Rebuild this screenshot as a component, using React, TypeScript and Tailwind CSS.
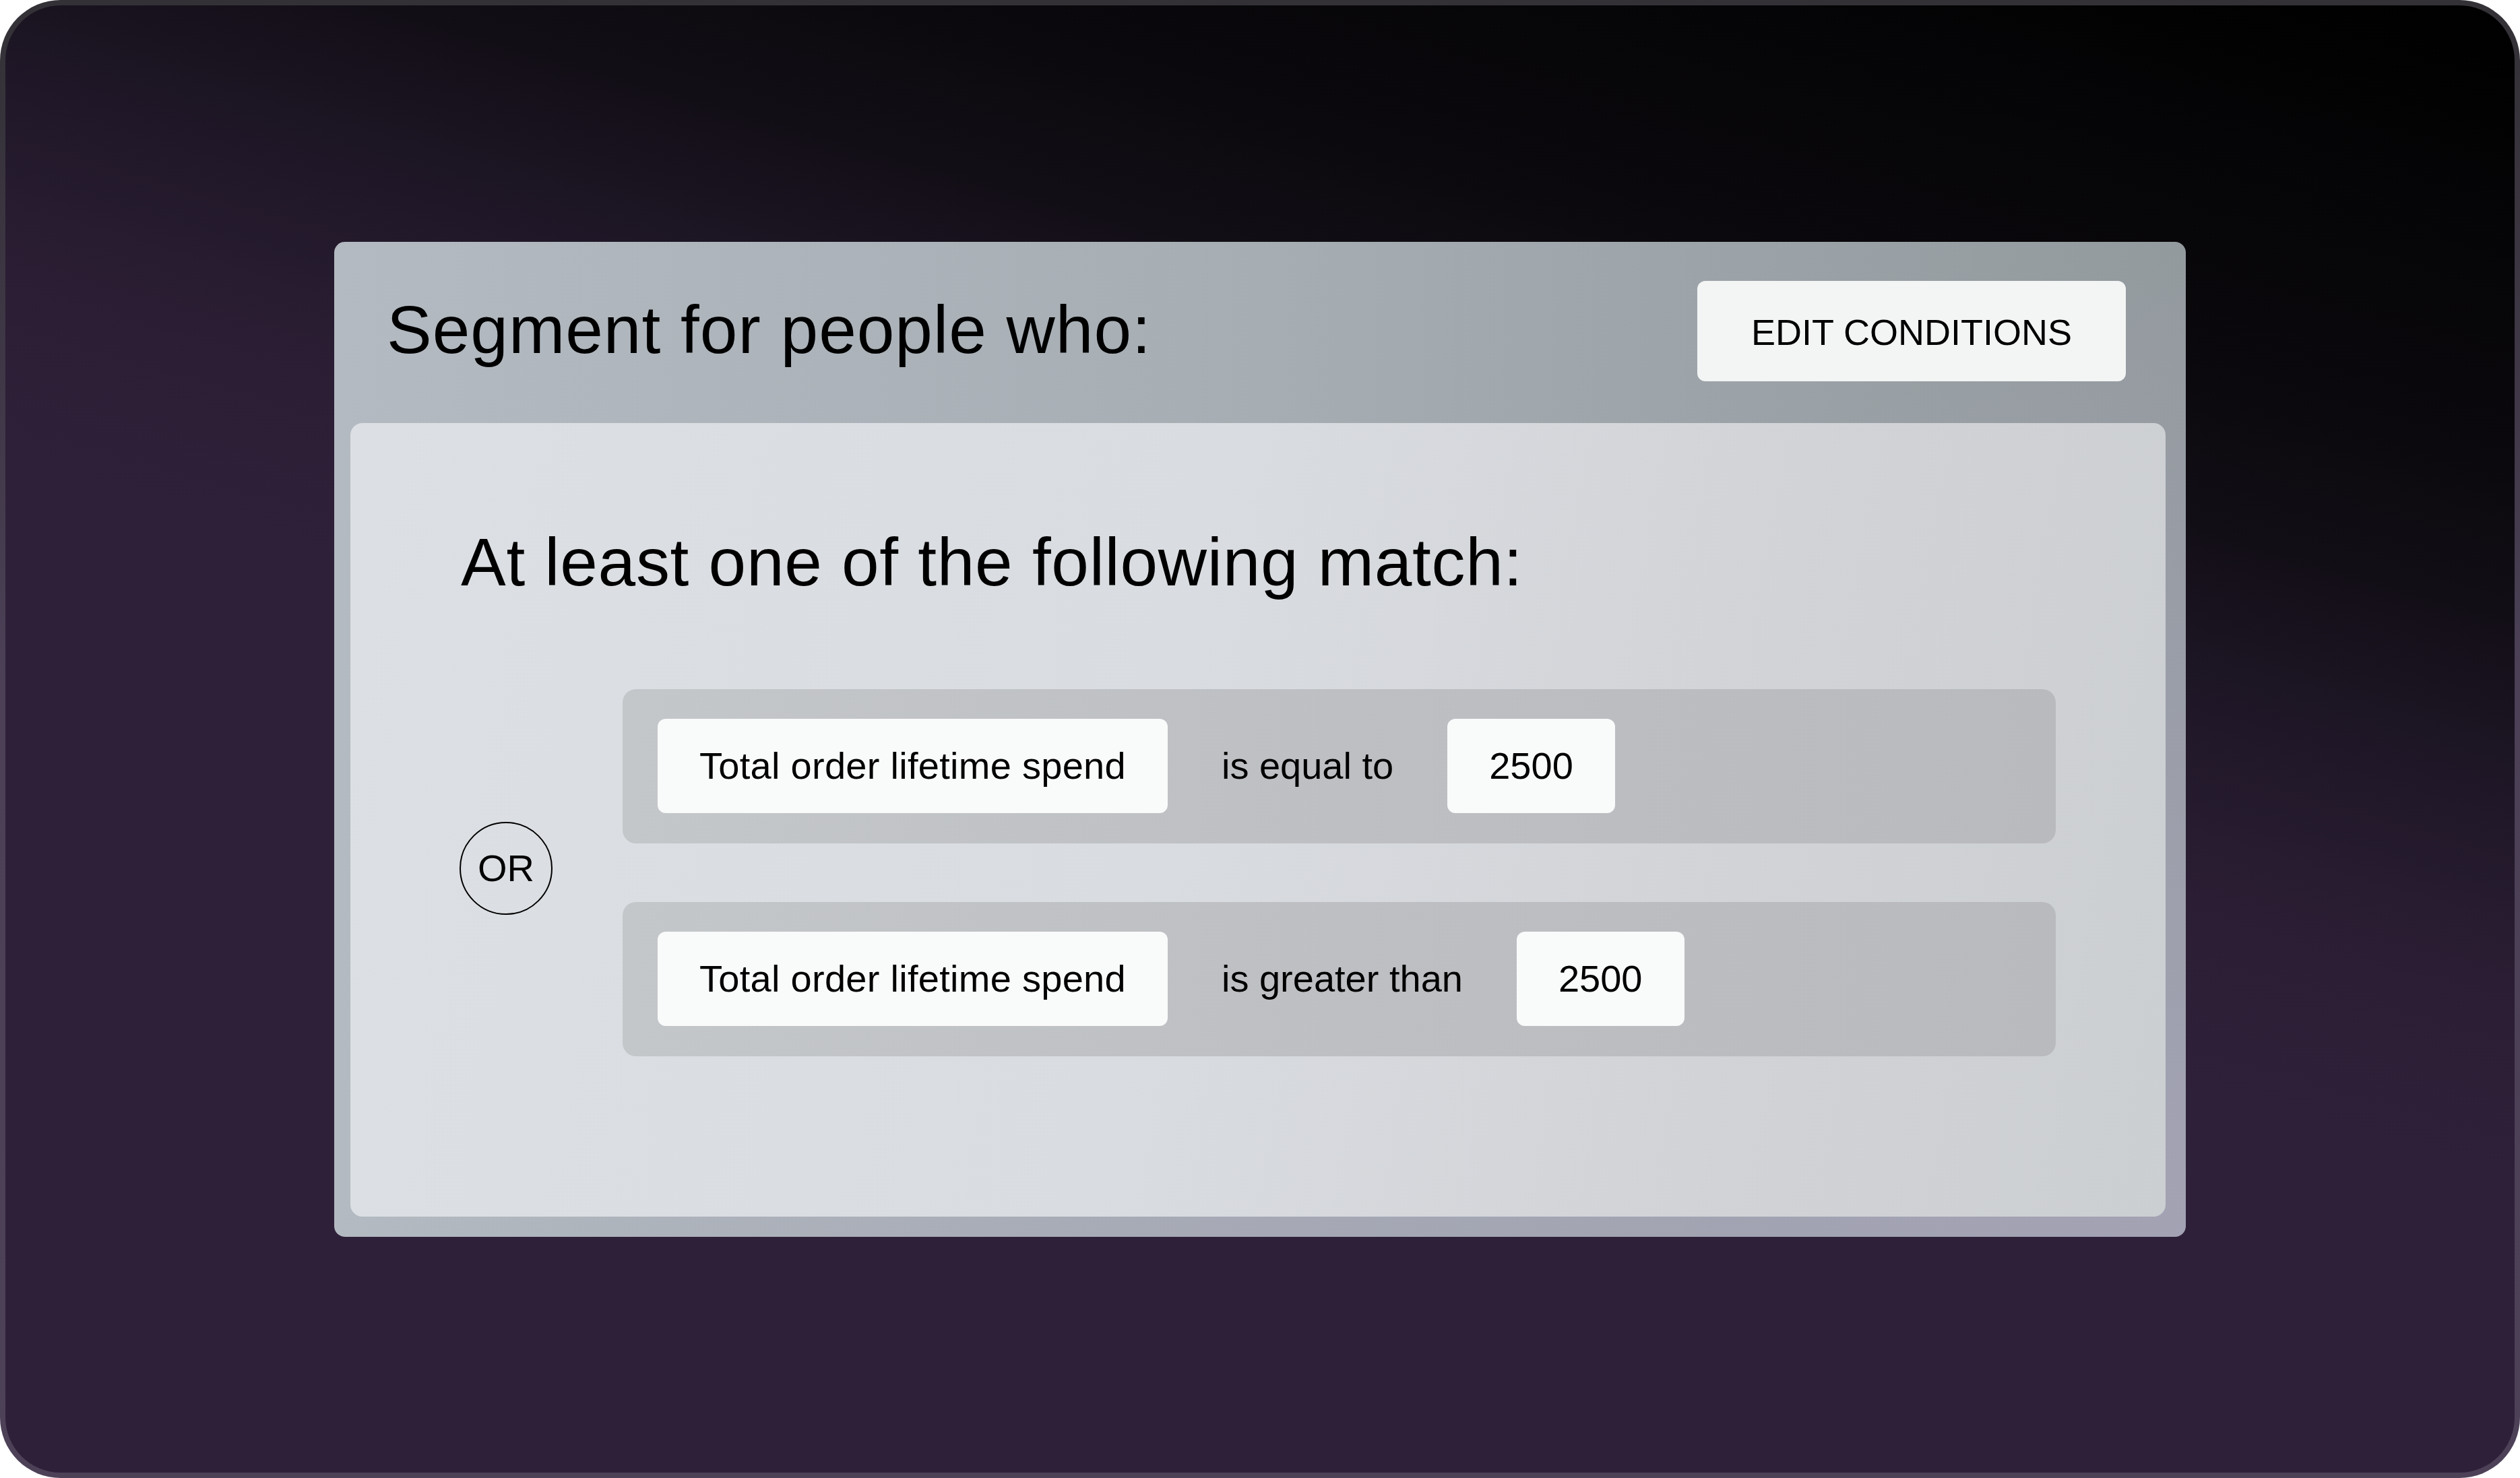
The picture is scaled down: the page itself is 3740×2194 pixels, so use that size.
export default function App() {
  const rows = [
    { field: 'Total order lifetime spend', op: 'is equal to', value: '2500' },
    { field: 'Total order lifetime spend', op: 'is greater than', value: '2500' },
  ];

  return (
    <div className="w-[3740px] h-[2194px] bg-white font-['Liberation_Sans',Arial,sans-serif] text-black">
      {/* Outer frame */}
      <div className="w-full h-full rounded-[90px] p-[8px] bg-[linear-gradient(to_bottom,#333136_0%,#3f3746_25%,#4b4056_45%,#4d4158_100%)]">
        <div className="w-full h-full rounded-[82px] flex items-center justify-center bg-[linear-gradient(196deg,#000000_0%,#0a080c_20%,#120e16_28%,#1f1727_36%,#2b1e34_45%,#2f2039_54%,#2f2039_100%)]">
          {/* Card */}
          <div className="w-[2748px] rounded-[16px] pl-[24px] pr-[30px] pb-[30px] flex flex-col bg-[linear-gradient(to_top_left,rgba(166,164,184,0.85)_0%,rgba(166,164,184,0)_50%),linear-gradient(to_right,#b3bac1_0%,#a6adb3_50%,#939a9e_100%)]">
            {/* Header */}
            <div className="h-[269px] flex items-center justify-between pl-[54px] pr-[59px]">
              <h1 className="text-[100px] leading-none font-normal tracking-[0.01em] -mt-[8px]">Segment for people who:</h1>
              <button className="h-[149px] w-[636px] rounded-[12px] bg-[#f3f4f4] text-[54px] leading-none flex items-center justify-center pt-[4px] -mt-[4px]">
                EDIT CONDITIONS
              </button>
            </div>

            {/* Inner panel */}
            <div className="rounded-[18px] pt-[156px] pb-[238px] pl-[164px] pr-[163px] bg-[linear-gradient(100deg,#dcdfe3_0%,#d9dce0_45%,#d1d3d7_75%,#cccfd2_100%)]">
              <h2 className="text-[100px] leading-none font-normal tracking-[0.007em]">At least one of the following match:</h2>

              <div className="mt-[139px] flex items-center">
                <div className="w-[138px] h-[138px] shrink-0 rounded-full border-[2px] border-black flex items-center justify-center text-[56px] leading-none -mt-[12px] -ml-[2px]">
                  OR
                </div>

                <div className="ml-[104px] flex-1 flex flex-col gap-[87px]">
                  {rows.map((r, i) => (
                    <div
                      key={i}
                      className="h-[229px] rounded-[20px] pl-[52px] flex items-center gap-[80px] bg-[linear-gradient(to_right,#c4c7ca_0%,#bdbfc3_50%,#b8babe_100%)]"
                    >
                      <div className="h-[140px] px-[62px] rounded-[12px] bg-[#f9fafa] flex items-center text-[56px] leading-none tracking-[0.005em]">
                        {r.field}
                      </div>
                      <span className="text-[56px] leading-none">{r.op}</span>
                      <div className="h-[140px] px-[62px] rounded-[12px] bg-[#f9fafa] flex items-center text-[56px] leading-none">
                        {r.value}
                      </div>
                    </div>
                  ))}
                </div>
              </div>
            </div>
          </div>
        </div>
      </div>
    </div>
  );
}
